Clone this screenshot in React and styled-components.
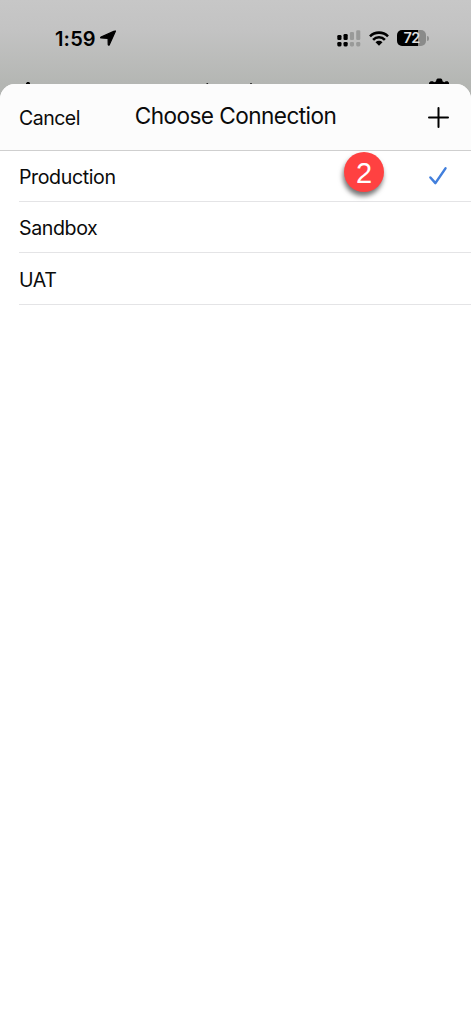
import React from "react";
import styled, { createGlobalStyle } from "styled-components";

const GlobalStyle = createGlobalStyle`
  * { box-sizing: border-box; }
  body { margin: 0; background: #fff; }
  svg { display: block; flex: none; }
`;

const Screen = styled.div`
  width: 471px;
  height: 1024px;
  overflow: hidden;
  display: flex;
  flex-direction: column;
  background: linear-gradient(#c7c7c7 0, #c3c3c3 30px, #b4b6b3 84px, #b2b4b1 110px);
  font-family: Inter, "Liberation Sans", sans-serif;
  color: #0b0b0b;
`;

const StatusBar = styled.div`
  height: 76px;
  flex: none;
  display: flex;
  justify-content: space-between;
  padding: 28px 42px 0 55px;
`;

const Group = styled.div`
  display: flex;
  align-items: center;
  height: 20px;
  gap: ${(p) => p.$gap}px;
`;

const Clock = styled.span`
  font-size: 20px;
  line-height: 20px;
  padding-top: 1px;
  font-weight: 600;
  letter-spacing: 0.15px;
  color: #000;
`;

const Battery = styled.div`
  display: flex;
  align-items: center;
  gap: 1px;
  &::after {
    content: "";
    width: 2px;
    height: 5px;
    border-radius: 0 2px 2px 0;
    background: #8f908f;
  }
`;

const Charge = styled.div`
  width: 29px;
  height: 16px;
  border-radius: 5px;
  background: linear-gradient(90deg, #000 ${(p) => p.$level}%, #8a8b8a ${(p) => p.$level}%);
  color: #dedede;
  font-size: 14.5px;
  font-weight: 600;
  line-height: 16px;
  letter-spacing: -0.7px;
  text-align: center;
`;

const CoveredBar = styled.div`
  height: 8px;
  flex: none;
  overflow: hidden;
`;

const Sheet = styled.main`
  flex: 1;
  background: #fff;
  border-radius: 15px 15px 0 0;
  overflow: hidden;
`;

const Header = styled.header`
  height: 67px;
  display: grid;
  grid-template-columns: 1fr auto 1fr;
  align-items: center;
  padding: 0 22px 2px 22px;
  background: #fcfcfc;
  border-bottom: 1px solid #cfcfcf;
`;

const TextButton = styled.button`
  justify-self: start;
  border: 0;
  margin-left: -3px;
  padding: 4px 0 0;
  background: none;
  font: 400 19.5px/24px Inter, "Liberation Sans", sans-serif;
  letter-spacing: -0.5px;
  color: inherit;
`;

const Title = styled.h1`
  margin: 0;
  font-size: 22.6px;
  line-height: 28px;
  font-weight: 400;
  letter-spacing: -0.55px;
`;

const IconButton = styled.button`
  justify-self: end;
  display: flex;
  border: 0;
  padding: 2px 0 0;
  background: none;
  color: #000;
`;

const List = styled.ul`
  list-style: none;
  margin: 0;
  padding: 0 0 0 19px;
`;

const Row = styled.li`
  height: ${(p) => p.$height}px;
  display: flex;
  align-items: center;
  border-bottom: 1px solid #e4e4e6;
  padding-right: 23px;
  font-size: 19.6px;
  line-height: 24px;
  letter-spacing: -0.4px;
`;

const Name = styled.span`
  flex: 1;
  padding-top: 2px;
`;

const Marker = styled.span`
  width: 40px;
  height: 40px;
  margin: -8px 44px 0 0;
  border-radius: 50%;
  background: #ff4141;
  box-shadow: -1px 4px 5px rgba(0, 0, 0, 0.55);
  color: #fff;
  font: 29px/42px "Liberation Sans", sans-serif;
  letter-spacing: 0;
  text-align: center;
`;

const LocationArrow = () => (
  <svg width="16" height="16" viewBox="0 0 16 16" stroke="#000" strokeWidth="1.2" strokeLinejoin="round">
    <path d="M14.9 .9 1 7c-.6.3-.4 1 .2 1l6.9.5.1 6.1c0 .7.8.8 1.1.1L15.3 1.5c.2-.4 0-.8-.4-.6Z" />
  </svg>
);

const Signal = () => (
  <svg width="24" height="17" viewBox="0 0 24 17">
    <rect x="0.3" y="5" width="4.2" height="5" rx="1.3" />
    <rect x="6.5" y="4" width="4.2" height="6" rx="1.3" />
    <rect x="0.3" y="12" width="4.2" height="4.4" rx="1.3" />
    <rect x="6.5" y="12" width="4.2" height="4.4" rx="1.3" />
    <g fill="#999a99">
      <rect x="12.9" y="2" width="4.1" height="8" rx="1.3" />
      <rect x="19.2" y="0.2" width="4.1" height="9.8" rx="1.3" />
      <rect x="12.9" y="12" width="4.1" height="4.4" rx="1.3" />
      <rect x="19.2" y="12" width="4.1" height="4.4" rx="1.3" />
    </g>
  </svg>
);

const Wifi = () => (
  <svg width="20" height="15" viewBox="0 0 20 15" fill="none" stroke="#000" strokeWidth="2.6">
    <path d="M1 5.3a12.8 12.8 0 0 1 18 0" />
    <path d="M4.1 8.8a8.2 8.2 0 0 1 11.8 0" />
    <path d="M6.5 11.3a5 5 0 0 1 7 0L10 14.8Z" fill="#000" stroke="none" />
  </svg>
);

const CoveredToolbar = () => (
  <svg width="471" height="8" viewBox="0 0 471 8">
    <path d="M26 8v-.8L27.2 6h2L30 7.2V8Z" />
    <rect x="206.5" y="7" width="1.6" height="1" opacity=".8" />
    <rect x="250.2" y="7" width="1.6" height="1" opacity=".8" />
    <path d="M429 8V6.8l1.7-1.6h2.2l1.2 1.1 1.8-.8.7-2.2 1-.7h3.4l1 .7.7 2.2 1.8.8 1.2-1.1h2L449 6.8V8Z" />
  </svg>
);

const Plus = () => (
  <svg width="21" height="21" viewBox="0 0 21 21" stroke="currentColor" strokeWidth="2" strokeLinecap="round">
    <path d="M10.5 1v19M1 10.5h19" />
  </svg>
);

const Check = () => (
  <svg width="20" height="20" viewBox="0 0 20 20" fill="none" stroke="#427fdc" strokeWidth="2.5" strokeLinecap="round" strokeLinejoin="round">
    <path d="m2.4 11.5 5 5.6L17.5 2.4" />
  </svg>
);

const connections = [
  { name: "Production", selected: true, height: 51 },
  { name: "Sandbox", height: 51 },
  { name: "UAT", height: 52 },
];

export default function App() {
  return (
    <Screen>
      <GlobalStyle />
      <StatusBar>
        <Group $gap={4}>
          <Clock>1:59</Clock>
          <LocationArrow />
        </Group>
        <Group $gap={8}>
          <Signal />
          <Wifi />
          <Battery>
            <Charge $level={74}>72</Charge>
          </Battery>
        </Group>
      </StatusBar>
      <CoveredBar>
        <CoveredToolbar />
      </CoveredBar>
      <Sheet>
        <Header>
          <TextButton>Cancel</TextButton>
          <Title>Choose Connection</Title>
          <IconButton aria-label="Add">
            <Plus />
          </IconButton>
        </Header>
        <List>
          {connections.map((c) => (
            <Row key={c.name} $height={c.height}>
              <Name>{c.name}</Name>
              {c.selected && <Marker>2</Marker>}
              {c.selected && <Check />}
            </Row>
          ))}
        </List>
      </Sheet>
    </Screen>
  );
}
